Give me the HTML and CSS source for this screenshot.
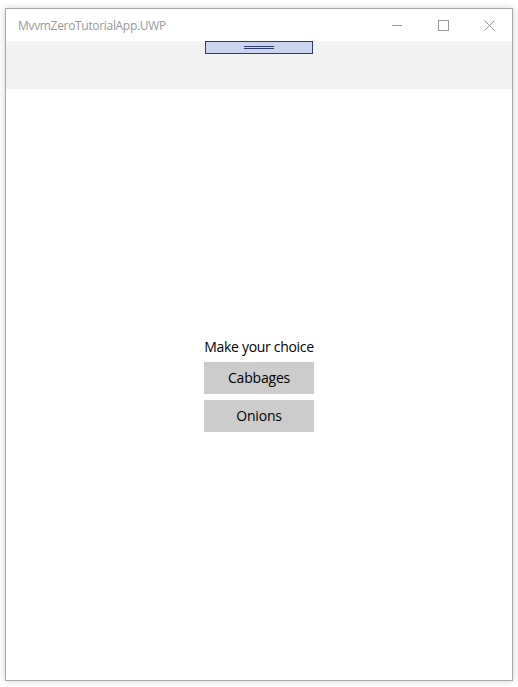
FILE: index.html
```html
<!DOCTYPE html>
<html>
<head>
<meta charset="utf-8">
<link rel="stylesheet" href="styles.css">
</head>
<body>
<div class="window">
  <div class="titlebar">
    <div class="title">MvvmZeroTutorialApp.UWP</div>
    <div class="caption">
      <div class="cbtn"><svg width="10" height="10" viewBox="0 0 10 10"><line x1="0" y1="5.5" x2="10" y2="5.5" stroke="#999" stroke-width="1"/></svg></div>
      <div class="cbtn"><svg width="11" height="11" viewBox="0 0 11 11"><rect x="0.5" y="0.5" width="10" height="10" fill="none" stroke="#999" stroke-width="1"/></svg></div>
      <div class="cbtn"><svg width="11" height="11" viewBox="0 0 11 11"><path d="M0.5 0.5 L10.5 10.5 M10.5 0.5 L0.5 10.5" stroke="#999" stroke-width="1"/></svg></div>
    </div>
  </div>
  <div class="toolbar">
    <div class="handle"><span class="grip"></span></div>
  </div>
  <div class="content">
    <div class="stack">
      <div class="prompt">Make your choice</div>
      <button class="choice">Cabbages</button>
      <button class="choice">Onions</button>
    </div>
  </div>
</div>
</body>
</html>
```
FILE: styles.css
```css
html, body {
  margin: 0;
  padding: 0;
  background: #ffffff;
}
body {
  padding: 8px 5px 6px 5px;
  font-family: "Open Sans", "Noto Sans", sans-serif;
}
.window {
  box-sizing: border-box;
  width: 508px;
  height: 673px;
  border: 1px solid #a9a9a9;
  background: #ffffff;
  box-shadow: 0 0 7px rgba(0, 0, 0, 0.18);
  display: flex;
  flex-direction: column;
}
.titlebar {
  height: 32px;
  display: flex;
  align-items: center;
  justify-content: space-between;
  flex: none;
}
.title {
  padding-left: 12px;
  font-size: 12px;
  color: #999999;
  letter-spacing: -0.32px;
}
.caption {
  display: flex;
  height: 32px;
}
.cbtn {
  width: 46px;
  height: 32px;
  display: flex;
  align-items: center;
  justify-content: center;
}
.cbtn svg {
  display: block;
}
.toolbar {
  flex: none;
  height: 48px;
  background: #f2f2f2;
  display: flex;
  justify-content: center;
  align-items: flex-start;
}
.handle {
  box-sizing: border-box;
  width: 108px;
  height: 13px;
  background: #c9d5f0;
  border: 1px solid #2f3b6e;
  display: flex;
  justify-content: center;
  align-items: center;
}
.grip {
  display: block;
  width: 30px;
  height: 3px;
  box-sizing: border-box;
  border-top: 1px solid #2f3b6e;
  border-bottom: 1px solid #2f3b6e;
}
.content {
  flex: 1;
  display: flex;
  align-items: center;
  justify-content: center;
}
.stack {
  width: 110px;
  display: flex;
  flex-direction: column;
  align-items: stretch;
  margin-top: 2px;
}
.prompt {
  font-size: 14px;
  line-height: 14px;
  color: #000000;
  text-align: center;
  white-space: nowrap;
  letter-spacing: -0.3px;
  margin-bottom: 8px;
}
.choice {
  height: 32px;
  border: none;
  background: #cccccc;
  font-family: inherit;
  font-size: 14px;
  letter-spacing: -0.2px;
  color: #000000;
  padding: 0;
  margin: 0 0 6px 0;
}
.choice:last-child {
  margin-bottom: 0;
}
```
